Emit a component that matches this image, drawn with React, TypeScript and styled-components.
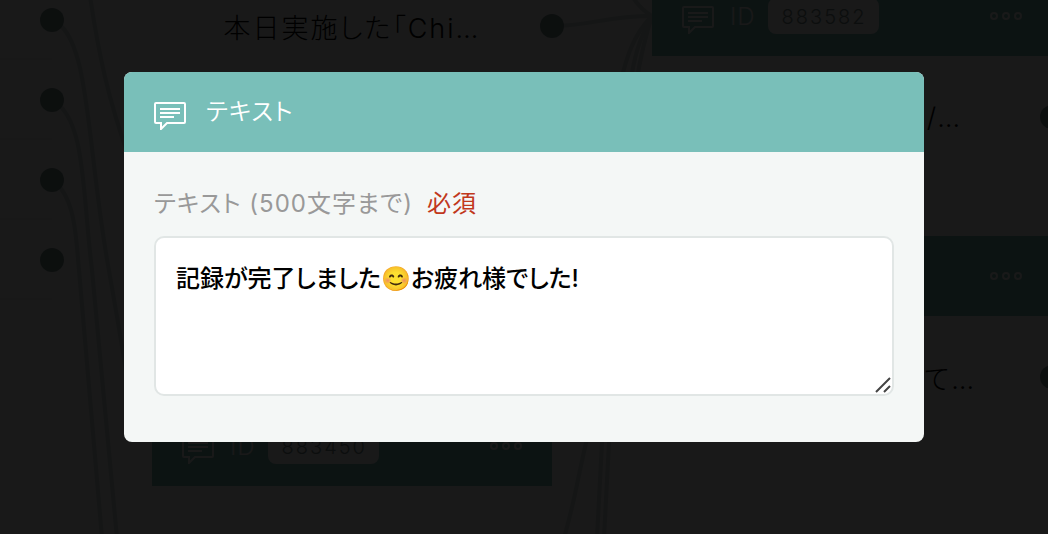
import React from "react";
import styled, { createGlobalStyle } from "styled-components";

const GlobalStyle = createGlobalStyle`
  *, *::before, *::after { box-sizing: border-box; }
  body {
    margin: 0;
    background: #fafafa;
    color: #000;
    font-family: Inter, "Noto Sans CJK JP", sans-serif;
    font-feature-settings: "palt";
  }
`;

const Page = styled.div`
  display: grid;
  min-height: 100vh;
`;

const Canvas = styled.main`
  position: relative;
  grid-area: 1 / 1;
  overflow: hidden;
  background: #fafafa;
`;

const Wires = styled.svg`
  display: block;
  overflow: visible;
  fill: none;
  stroke: #cfdedc;
  stroke-width: 4;
`;

const Node = styled.section<{ $x: number; $y: number }>`
  position: absolute;
  left: ${(p) => p.$x}px;
  top: ${(p) => p.$y}px;
  width: 400px;
`;

const NodeHeader = styled.header`
  display: flex;
  align-items: center;
  height: 80px;
  padding: 0 30px;
  background: #79bfb9;
  color: #fafafa;
`;

const NodeLabel = styled.span`
  margin: 0 12px 0 16px;
  font-size: 24px;
  font-weight: 300;
  letter-spacing: 1px;
`;

const NodeId = styled.span`
  height: 36px;
  padding: 0 12px 0 14px;
  border-radius: 8px;
  background: #fafafa;
  color: #79908d;
  font-size: 20px;
  font-weight: 300;
  line-height: 38px;
  letter-spacing: 2px;
`;

const MoreButton = styled.button`
  display: flex;
  margin-left: auto;
  padding: 0;
  border: 0;
  background: none;
  color: inherit;
`;

const NodeRow = styled.div<{ $height: number; $end?: number; $line?: boolean }>`
  position: relative;
  display: flex;
  align-items: center;
  justify-content: ${(p) => (p.$end ? "flex-end" : "center")};
  height: ${(p) => p.$height}px;
  padding-right: ${(p) => p.$end ?? 0}px;
  box-shadow: ${(p) => (p.$line ? "inset 0 -2px #eef2f1" : "none")};
  font-size: 27px;
  font-weight: 300;
  letter-spacing: 2px;
`;

const Port = styled.i`
  position: absolute;
  right: -12px;
  width: 24px;
  height: 24px;
  border-radius: 50%;
  background: #7d9693;
`;

const Overlay = styled.div`
  position: relative;
  grid-area: 1 / 1;
  display: flex;
  justify-content: center;
  align-items: flex-start;
  padding: 72px 24px;
  background: rgba(0, 0, 0, 0.9);
`;

const Dialog = styled.form`
  width: 100%;
  max-width: 800px;
  border-radius: 8px;
  overflow: hidden;
  background: #f4f7f6;
`;

const DialogHeader = styled.header`
  display: flex;
  align-items: center;
  gap: 20px;
  height: 80px;
  padding: 0 30px;
  background: #79bfb9;
  color: #fff;
`;

const Title = styled.h1`
  margin: 0;
  font-size: 24px;
  font-weight: 350;
  line-height: 36px;
  letter-spacing: 1px;
`;

const DialogBody = styled.div`
  padding: 30px 30px 46px;
`;

const FieldLabel = styled.label`
  display: flex;
  gap: 14px;
  margin-bottom: 10px;
  color: #999;
  font-size: 24px;
  font-weight: 400;
  line-height: 44px;
  letter-spacing: 1px;
`;

const Required = styled.span`
  color: #c1381c;
`;

const Field = styled.div`
  display: grid;
`;

const TextArea = styled.textarea`
  grid-area: 1 / 1;
  display: block;
  width: 100%;
  height: 160px;
  padding: 20px;
  border: 2px solid #e1e6e5;
  border-radius: 10px;
  outline: 0;
  resize: none;
  background: #fff;
  color: #000;
  font: 500 24px/42px Inter, "Noto Sans CJK JP", sans-serif;
  font-feature-settings: "palt";
`;

const Grip = styled.svg`
  grid-area: 1 / 1;
  place-self: end;
  margin: 2px;
  z-index: 1;
  pointer-events: none;
`;

const CommentIcon = () => (
  <svg width="32" height="36" viewBox="0 0 32 36" fill="none" stroke="currentColor" strokeWidth="2" aria-hidden="true">
    <path d="M2 9h28a1 1 0 0 1 1 1v18a1 1 0 0 1-1 1H13l-6 6v-6H2a1 1 0 0 1-1-1V10a1 1 0 0 1 1-1z" />
    <path d="M6 15h20M6 19h20M6 23h14" />
  </svg>
);

const MoreIcon = () => (
  <svg width="32" height="8" viewBox="0 0 32 8" fill="none" stroke="currentColor" strokeWidth="2" aria-hidden="true">
    <circle cx="4" cy="4" r="3" />
    <circle cx="16" cy="4" r="3" />
    <circle cx="28" cy="4" r="3" />
  </svg>
);

const Header = ({ id }: { id?: string }) => (
  <NodeHeader>
    <CommentIcon />
    <NodeLabel>ID</NodeLabel>
    {id && <NodeId>{id}</NodeId>}
    <MoreButton type="button" aria-label="メニュー">
      <MoreIcon />
    </MoreButton>
  </NodeHeader>
);

export default function App() {
  return (
    <Page>
      <GlobalStyle />
      <Canvas>
        <Wires width="1" height="1">
          <path d="M90 -4C98 50 108 100 130 160" />
          <path d="M52 20C90 34 86 140 108 265S124 360 130 400" />
          <path d="M52 100C86 118 82 190 92 270L117 538" />
          <path d="M52 180C76 196 76 240 79 270L102 538" />
          <path d="M552 26C590 26 606 16 652 16" />
          <path d="M630 -8Q638 8 652 16" />
          <path d="M652 16C632 36 626 60 620 84S596 400 586 443S575 500 564 538" />
          <path d="M652 16C638 40 634 60 630 84L602 443L597 538" />
          <path d="M652 16C644 40 640 60 636 84L609 443L604 538" />
        </Wires>
        <Node $x={-348} $y={-20}>
          {[0, 1, 2, 3].map((n) => (
            <NodeRow key={n} $height={80} $line>
              <Port />
            </NodeRow>
          ))}
        </Node>
        <Node $x={152} $y={-34}>
          <NodeRow $height={120}>
            本日実施した「Chi…
            <Port />
          </NodeRow>
        </Node>
        <Node $x={152} $y={406}>
          <Header id="883450" />
        </Node>
        <Node $x={652} $y={-24}>
          <Header id="883582" />
          <NodeRow $height={122} $end={90}>
            /…
            <Port />
          </NodeRow>
        </Node>
        <Node $x={652} $y={236}>
          <Header />
          <NodeRow $height={122} $end={76}>
            て…
            <Port />
          </NodeRow>
        </Node>
      </Canvas>
      <Overlay>
        <Dialog role="dialog" aria-labelledby="dialog-title">
          <DialogHeader>
            <CommentIcon />
            <Title id="dialog-title">テキスト</Title>
          </DialogHeader>
          <DialogBody>
            <FieldLabel htmlFor="message">
              テキスト (500文字まで)
              <Required>必須</Required>
            </FieldLabel>
            <Field>
              <TextArea id="message" maxLength={500} defaultValue="記録が完了しました😊お疲れ様でした!" />
              <Grip width="18" height="18" viewBox="0 0 18 18" stroke="#444" strokeWidth="2" aria-hidden="true">
                <path d="M2 16L16 2M10 16l6-6" />
              </Grip>
            </Field>
          </DialogBody>
        </Dialog>
      </Overlay>
    </Page>
  );
}
